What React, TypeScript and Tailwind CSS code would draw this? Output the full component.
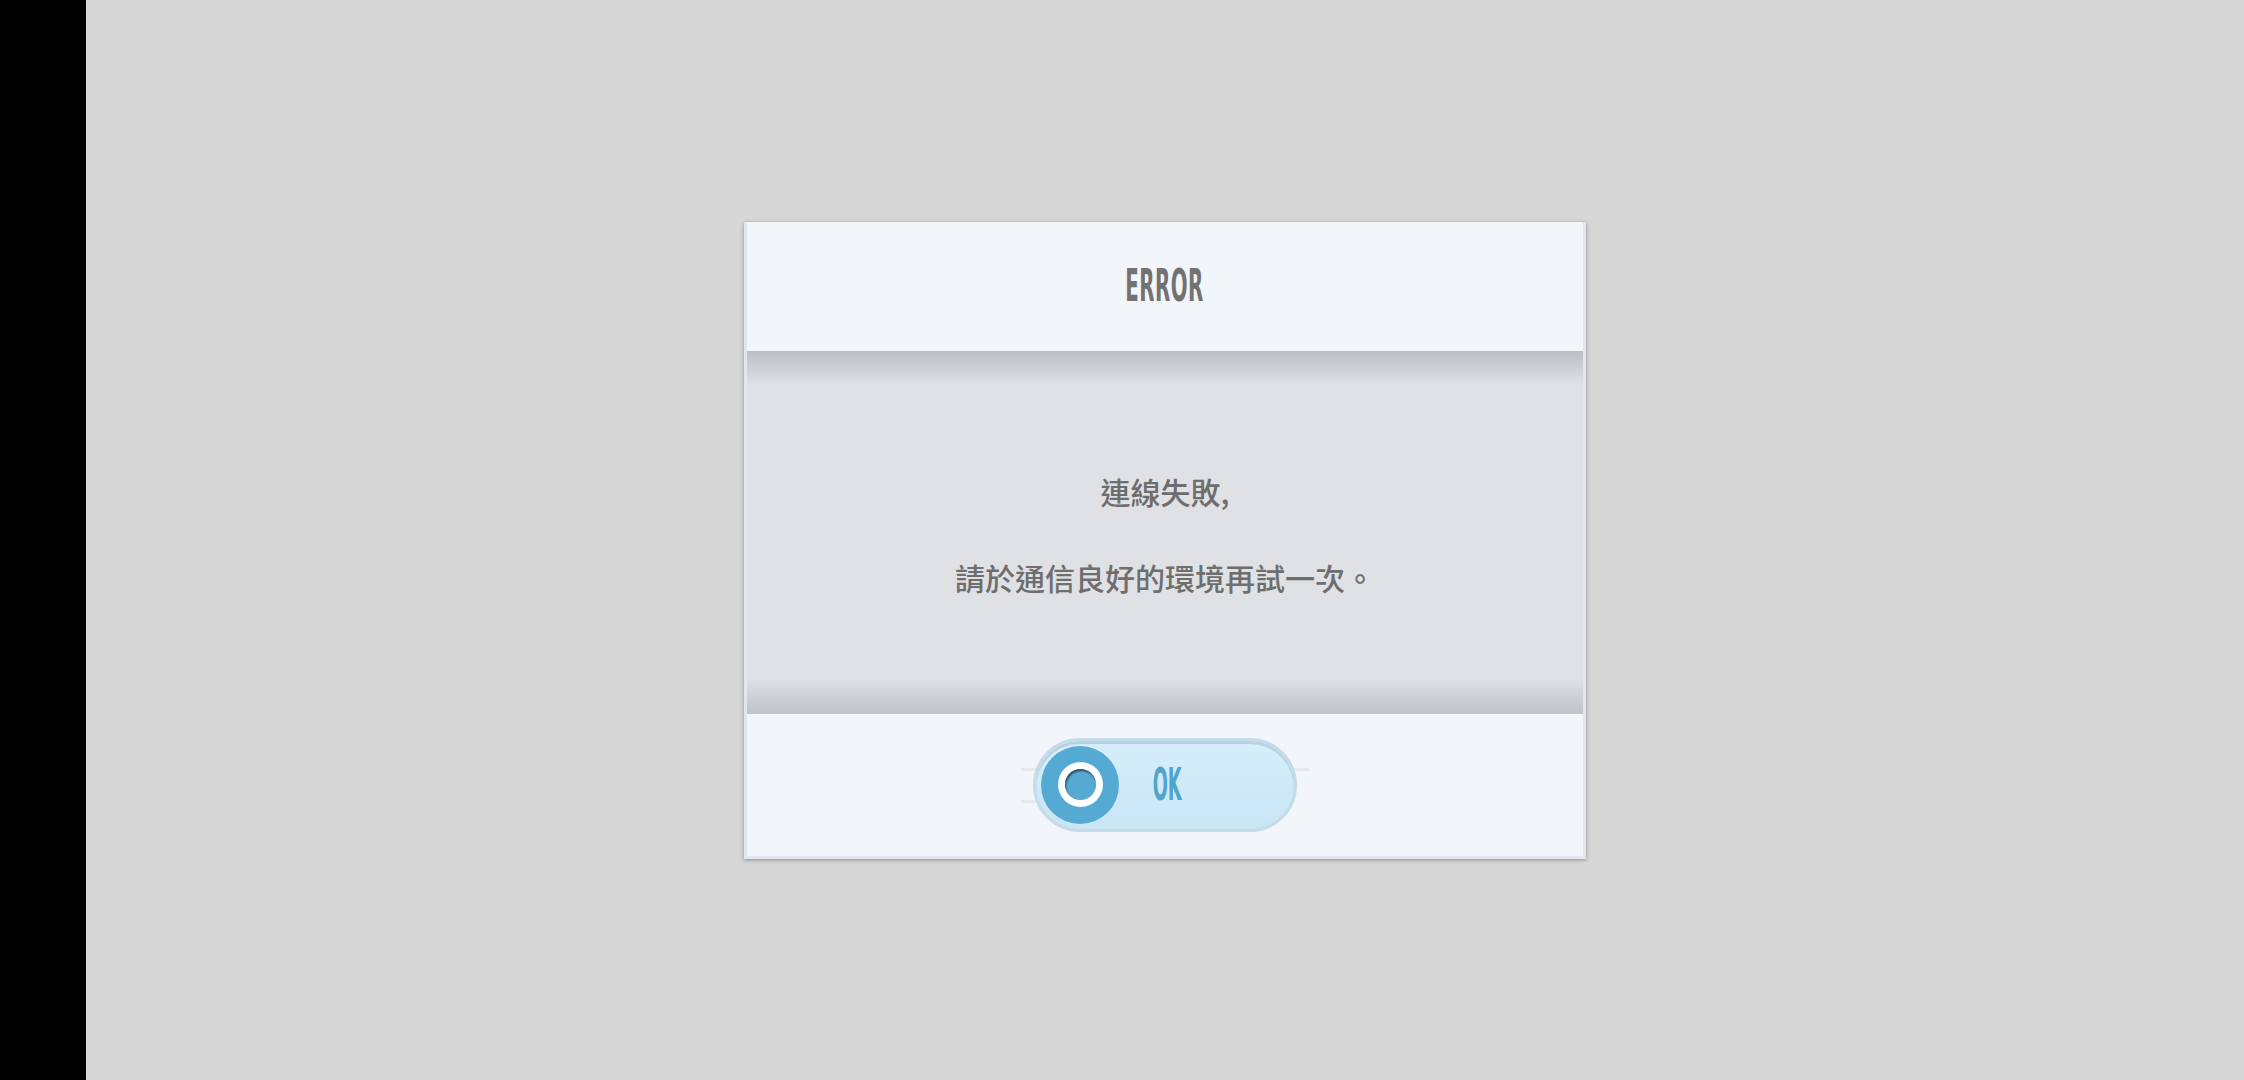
import React from "react";

const CJK = "font-['Noto_Sans_CJK_TC','Noto_Sans',sans-serif]";

export default function App() {
  return (
    <div className="flex h-[1080px] w-[2244px] overflow-hidden bg-[#d7d7d7]">
      <div className="w-[86px] shrink-0 bg-black" />
      <div className="flex flex-1 items-center justify-center">
        <ErrorDialog />
      </div>
    </div>
  );
}

function ErrorDialog() {
  return (
    <div className="flex w-[842px] flex-col border-l-[3px] border-r-[3px] border-b-[3px] border-[#e3e6ec] shadow-[0_1px_4px_rgba(0,0,0,0.35)]">
      {/* title */}
      <div className="flex h-[129px] items-center justify-center bg-[#f2f5fa]">
        <span className="inline-block origin-center scale-x-[0.5] font-['DejaVu_Sans_Condensed',sans-serif] text-[44px] font-bold leading-none tracking-[1px] text-[#727272]">
          ERROR
        </span>
      </div>

      {/* message */}
      <div className="relative flex h-[363px] flex-col items-center justify-center gap-[56px] bg-[#dfe1e4] pt-[4px]">
        <div className="pointer-events-none absolute inset-x-0 top-0 h-[34px] bg-gradient-to-b from-[#bcbec1] to-[#dfe1e4]" />
        <div className="pointer-events-none absolute inset-x-0 bottom-0 h-[36px] bg-gradient-to-t from-[#c0c2c5] to-[#dfe1e4]" />
        <p className={`relative ${CJK} text-[30px] font-medium leading-none text-[#6e6e6e]`}>
          連線失敗,
        </p>
        <p className={`relative ${CJK} text-[30px] font-medium leading-none text-[#6e6e6e]`}>
          請於通信良好的環境再試一次。
        </p>
      </div>

      {/* actions */}
      <div className="flex h-[142px] items-center justify-center bg-[#f2f5fa]">
        <OkButton />
      </div>
    </div>
  );
}

function OkButton() {
  return (
    <div className="relative">
      {/* faint deco lines behind the pill */}
      <div className="absolute left-[-12px] top-[30px] h-[3px] w-[24px] bg-[#e6e8ec]" />
      <div className="absolute left-[-12px] top-[62px] h-[3px] w-[24px] bg-[#e6e8ec]" />
      <div className="absolute right-[-12px] top-[30px] h-[3px] w-[24px] bg-[#e6e8ec]" />
      <button className="relative flex h-[94px] w-[264px] items-center rounded-full border-[3px] border-[#c4dbe8] bg-gradient-to-b from-[#d6eefa] to-[#c9e5f4] pl-[5px] shadow-[inset_0_3px_0_#b6d2e0]">
        <span className="flex h-[78px] w-[78px] items-center justify-center rounded-full bg-[#55aad3]">
          <span className="flex h-[45px] w-[45px] items-center justify-center rounded-full bg-white">
            <span className="h-[31px] w-[31px] rounded-full bg-[#56a9d1] shadow-[inset_1px_2px_2px_rgba(0,0,0,0.55)]" />
          </span>
        </span>
        <span className="ml-[16px] inline-block scale-x-[0.45] font-['DejaVu_Sans_Condensed',sans-serif] text-[44px] font-bold leading-none text-[#4fa5cf]">
          OK
        </span>
      </button>
    </div>
  );
}
